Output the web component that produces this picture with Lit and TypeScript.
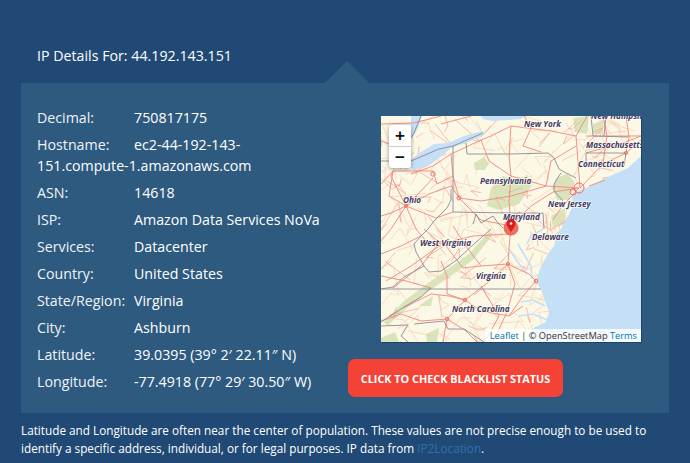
import { LitElement, css, html, svg } from "lit";
import { customElement } from "lit/decorators.js";

const rows: [string, string][] = [
  ["Decimal:", "750817175"],
  ["Hostname:", "ec2-44-192-143-151.compute-1.amazonaws.com"],
  ["ASN:", "14618"],
  ["ISP:", "Amazon Data Services NoVa"],
  ["Services:", "Datacenter"],
  ["Country:", "United States"],
  ["State/Region:", "Virginia"],
  ["City:", "Ashburn"],
  ["Latitude:", "39.0395 (39° 2′ 22.11″ N)"],
  ["Longitude:", "-77.4918 (77° 29′ 30.50″ W)"],
];

// map features, in map-local pixels (260x226)
const greens = [
  "M93 47 L103 41 L108 47 L104 54 L94 54 Z",
  "M110 72 L122 60 L140 66 L146 58 L150 70 L138 88 L118 94 L106 90 Z",
  "M175 62 L186 58 L194 66 L188 84 L176 84 L172 72 Z",
  "M3 206 L22 186 L43 170 L60 158 L88 138 L108 116 L112 118 L92 144 L64 164 L46 176 L26 192 L6 210 Z",
  "M192 2 L208 0 L206 18 L194 16 Z",
  "M212 8 L222 4 L222 18 L212 18 Z",
  "M0 222 L14 216 L18 226 L0 226 Z",
  "M45 218 L58 212 L56 226 L46 226 Z",
  "M170 100 L184 92 L184 108 L172 112 Z",
  "M38 190 L52 180 L50 190 Z",
];
const water = [
  "M30 44 L37 38 L53 28 L67 27 L83 20 L102 15 L103 19 L85 27 L70 32 L58 42 L50 48 L33 55 L30 52 Z",
  "M100 0 L143 0 L140 3 L112 5 L102 3 Z",
  "M30 0 L41 0 L36 14 L31 22 L30 22 Z",
  "M260 40 L247 52 L227 61 L205 72 L198 75 L191 78 L192 90 L187 100 L180 113 L175 120 L173 130 L167 138 L160 150 L155 165 L160 173 L163 183 L168 196 L165 206 L150 213 L146 226 L260 226 Z",
];
const bays = [
  "M162 113 L150 120 L146 128",
  "M137 128 L144 140 L150 150 L151 163",
  "M128 133 L136 145 L146 158",
  "M140 186 L152 184 L164 190",
  "M138 200 L152 198 L166 204",
];
const majorRoads = [
  "M30 58 L52 50 L70 38 L100 24 L110 20 L130 10 L170 15 L195 20 L206 0",
  "M52 55 L30 55 L12 55 L0 68",
  "M52 62 L40 75 L25 90 L10 97 L0 100",
  "M25 90 L10 60 L12 55",
  "M25 90 L48 78 L70 70 L78 82",
  "M25 90 L35 113 L45 125 L60 130",
  "M25 90 L55 102 L72 96",
  "M25 90 L10 113 L0 125",
  "M52 55 L56 68 L72 60 L78 82",
  "M72 60 L70 38",
  "M78 82 L100 85 L130 80 L165 70 L198 72",
  "M78 82 L100 104 L130 110",
  "M130 110 L150 90 L172 76 L198 72",
  "M100 24 L108 45 L130 60 L165 70",
  "M130 10 L128 40 L130 60 L128 85 L130 110",
  "M195 20 L199 72",
  "M205 37 L245 26 L260 20",
  "M199 72 L222 48 L245 37 L260 24",
  "M208 70 L224 64",
  "M205 20 L260 20",
  "M165 70 L170 45 L195 30",
  "M198 72 L180 92 L172 104",
  "M130 110 L128 132 L127 148",
  "M127 148 L148 158 L155 165",
  "M127 148 L105 168 L84 184 L66 203",
  "M127 148 L100 150 L82 152 L65 130 L60 125",
  "M127 148 L134 168 L126 196 L112 226",
  "M84 184 L100 195 L128 200 L142 190",
  "M84 184 L66 178 L66 160 L60 145",
  "M66 203 L40 205 L20 198 L0 205",
  "M66 203 L85 215 L96 226",
  "M66 203 L62 226",
  "M84 184 L68 180 L50 178 L22 192",
  "M40 120 L20 130 L0 138",
  "M60 125 L40 150 L12 172",
  "M43 113 L60 128 L92 120 L128 118",
  "M5 165 L30 150 L58 130",
  "M104 226 L118 200 L100 170",
  "M155 165 L142 180 L128 200",
  "M0 160 L25 165 L50 172",
  "M0 8 L33 7 L60 0",
  "M60 8 L90 0",
  "M143 0 L150 12 L142 30 L160 36",
  "M222 0 L226 20 L222 48",
  "M245 0 L248 21 L245 37",
  "M0 25 L14 30 L30 30",
  "M12 55 L8 80 L25 90",
  "M72 110 L85 130 L100 150",
];
const hubs: [number, number, number][] = [
  [198, 72, 5],
  [192, 76, 3],
  [127, 148, 1.6],
  [155, 165, 1.8],
  [66, 203, 1.8],
  [84, 184, 1.8],
  [52, 58, 2.2],
  [78, 82, 2],
  [25, 90, 1.6],
  [245, 37, 1.6],
];
const borders = [
  "M102 17 L72 30 L58 33 L30 45 L0 45",
  "M40 0 L33 17 L30 22",
  "M72 30 L72 96 L130 97 L162 97 L163 113",
  "M85 27 L86 38 L130 38 L167 37 L173 42 L178 53 L185 57 L195 62",
  "M180 57 L173 68 L173 75 L182 85",
  "M92 108 L95 98 L100 107 L112 100 L117 107 L122 112",
  "M70 73 L70 84 L66 92 L53 105 L47 113 L40 120 L33 128 L35 136 L43 150 L48 156 L60 155 L77 143 L80 140 L93 128 L110 113",
  "M43 150 L23 161 L12 171 L0 173",
  "M0 173 L160 173",
  "M50 172 L40 181 L23 191 L0 206",
  "M0 210 L27 209 L20 220 L27 226",
  "M33 208 L63 205 L67 213 L83 213 L103 226",
  "M212 20 L247 21",
  "M205 37 L245 37 L243 50",
  "M205 37 L205 50",
  "M210 0 L212 20",
  "M225 0 L223 20",
];
const labels: [string, number, number][] = [
  ["New York", 143, 11],
  ["New Hampshire", 210, 3],
  ["Massachusetts", 205, 32],
  ["Connecticut", 197, 51],
  ["Pennsylvania", 99, 68],
  ["Ohio", 22, 87],
  ["New Jersey", 167, 91],
  ["Maryland", 122, 104],
  ["Delaware", 151, 124],
  ["West Virginia", 39, 130],
  ["Virginia", 95, 163],
  ["North Carolina", 71, 196],
];

// secondary roads: a fixed scatter, drawn under the water
const scatter = (count: number, start: number, reach: number) => {
  let seed = start;
  const rnd = (n: number) => {
    seed = (seed * 16807) % 2147483647;
    return (seed / 2147483647) * n;
  };
  const out: string[] = [];
  for (let i = 0; i < count; i++) {
    const x = rnd(240);
    const y = rnd(226);
    out.push(
      `M${x} ${y} L${x + rnd(reach) - reach / 2} ${y + rnd(reach) - reach / 2} L${x + rnd(reach * 2) - reach} ${y + rnd(reach * 2) - reach}`
    );
  }
  return out;
};
const minorRoads = scatter(190, 7, 26);
const midRoads = scatter(70, 31, 22);

@customElement("app-root")
export class AppRoot extends LitElement {
  static styles = css`
    :host {
      display: block;
      height: 463px;
      overflow: hidden;
      background: #204a75;
      color: #fff;
      font-family: "Open Sans", sans-serif;
      font-size: 14.22px;
      line-height: 21px;
    }

    .heading {
      padding: 45px 37px 0;
      height: 38px;
    }

    .panel {
      position: relative;
      display: flex;
      margin: 0 21px;
      height: 330px;
      padding: 24px 16px 0;
      box-sizing: border-box;
      background: #2e5a80;
    }

    .panel::before {
      content: "";
      position: absolute;
      left: 304px;
      top: -22px;
      border-left: 22px solid transparent;
      border-right: 22px solid transparent;
      border-bottom: 22px solid #2e5a80;
    }

    .details {
      width: 288px;
      flex: none;
    }

    .row {
      margin-bottom: 6px;
    }

    .label {
      display: inline-block;
      width: 97px;
      color: #eef3f7;
    }

    .side {
      display: flex;
      flex-direction: column;
      margin-left: 23px;
    }

    .map {
      position: relative;
      width: 260px;
      height: 226px;
      margin: 9px 0 0 33px;
      overflow: hidden;
      background: #fbf8e6;
      box-shadow: 1px 1px 0 #1d4468;
    }

    .map svg {
      display: block;
    }

    .map text {
      font-family: "Open Sans", sans-serif;
      font-size: 8.2px;
      font-weight: 700;
      font-style: italic;
      fill: #463c62;
      stroke: #fff;
      stroke-width: 1.5px;
      stroke-opacity: 0.7;
      paint-order: stroke;
    }

    .zoom {
      position: absolute;
      left: 8px;
      top: 9px;
      width: 22px;
      background: #fff;
      border-radius: 3px;
      box-shadow: 0 1px 4px rgba(0, 0, 0, 0.4);
    }

    .zoom div {
      height: 21px;
      display: flex;
      align-items: center;
      justify-content: center;
      font-family: "Liberation Sans", sans-serif;
      font-weight: 700;
      font-size: 17px;
      color: #111;
    }

    .zoom div + div {
      border-top: 1px solid #ccc;
    }

    .attribution {
      position: absolute;
      right: 0;
      bottom: 0;
      padding: 0 4px 0 5px;
      background: rgba(255, 255, 255, 0.8);
      font-size: 9.25px;
      line-height: 13px;
      color: #333;
    }

    .attribution a {
      color: #0078a8;
    }

    .check {
      align-self: flex-start;
      margin-top: 17px;
      height: 38px;
      width: 215px;
      display: flex;
      align-items: center;
      justify-content: center;
      background: #f44336;
      border-radius: 7px;
      font-size: 10.85px;
      font-weight: 700;
      white-space: nowrap;
      color: #fff;
    }

    .note {
      margin: 8px 21px 0;
      font-size: 11.75px;
      line-height: 18px;
    }

    .note a {
      color: #2f6fb0;
    }
  `;

  renderMap() {
    return svg`
      <svg width="260" height="226" viewBox="0 0 260 226">
        ${greens.map((d) => svg`<path d=${d} fill="#d8e4ba"></path>`)}
        ${minorRoads.map(
          (d) => svg`<path d=${d} fill="none" stroke="#f8cfb6" stroke-width="0.7"></path>`
        )}
        ${midRoads.map(
          (d) => svg`<path d=${d} fill="none" stroke="#f4a498" stroke-width="0.7"></path>`
        )}
        ${water.map((d) => svg`<path d=${d} fill="#c5dff6"></path>`)}
        ${bays.map(
          (d) => svg`<path d=${d} fill="none" stroke="#c5dff6" stroke-width="1.6"></path>`
        )}
        ${majorRoads.map(
          (d) => svg`<path d=${d} fill="none" stroke="#f0877c" stroke-width="0.9"></path>`
        )}
        ${hubs.map(
          ([x, y, r]) => svg`<circle cx=${x} cy=${y} r=${r} fill="none" stroke="#f0706a" stroke-width="1"></circle>`
        )}
        <circle cx="130" cy="112" r="7.500" fill="#ef4a44" opacity="0.8"></circle>
        ${borders.map(
          (d) => svg`<path d=${d} fill="none" stroke="#8e8a96" stroke-width="0.9"></path>`
        )}
        ${labels.map(([t, x, y]) => svg`<text x=${x} y=${y}>${t}</text>`)}
        <path d="M130 116 C126.500 111 125.500 109 125.500 107.500 A4.500 4.500 0 0 1 134.500 107.500 C134.500 109 133.500 111 130 116 Z" fill="#d5201c"></path>
        <circle cx="130" cy="107.500" r="1.300" fill="#fff"></circle>
      </svg>
    `;
  }

  render() {
    return html`
      <div class="heading">IP Details For: 44.192.143.151</div>
      <div class="panel">
        <div class="details">
          ${rows.map(
            ([k, v]) => html`<div class="row"><span class="label">${k}</span>${v}</div>`
          )}
        </div>
        <div class="side">
          <div class="map">
            ${this.renderMap()}
            <div class="zoom"><div>+</div><div>−</div></div>
            <div class="attribution"><a>Leaflet</a> | © OpenStreetMap <a>Terms</a></div>
          </div>
          <div class="check">CLICK TO CHECK BLACKLIST STATUS</div>
        </div>
      </div>
      <div class="note">
        Latitude and Longitude are often near the center of population. These values are not precise enough to be used to identify a specific address, individual, or for legal purposes. IP data from <a>IP2Location</a>.
      </div>
    `;
  }
}
